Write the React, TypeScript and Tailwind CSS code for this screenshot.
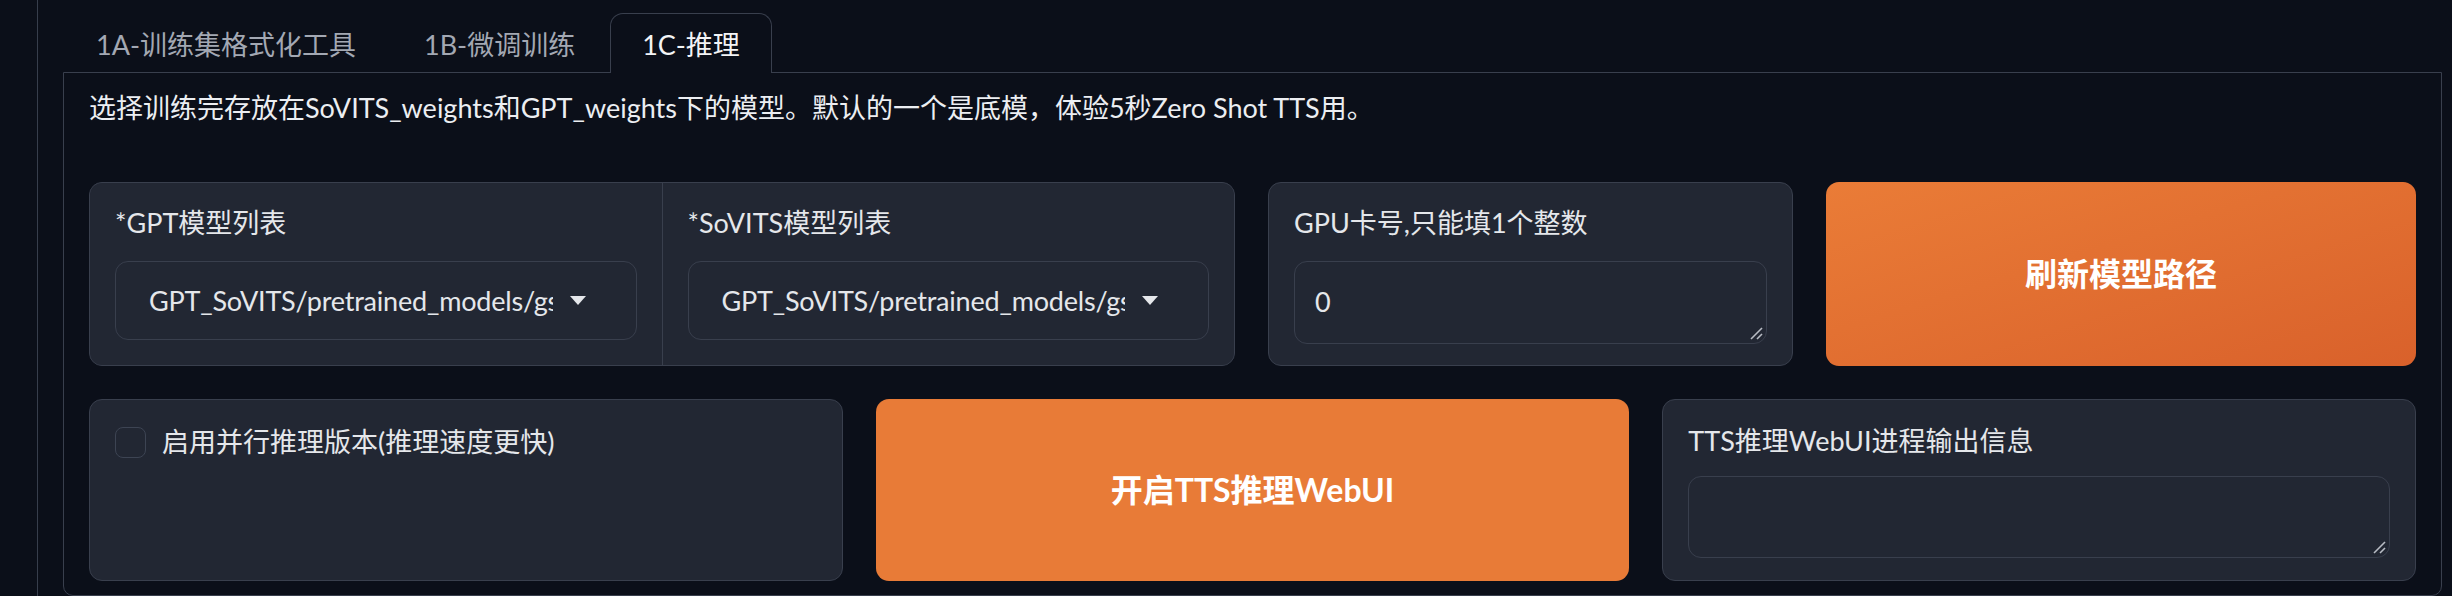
import React from "react";

const FONT = { fontFamily: "Lato, 'Noto Sans CJK SC', 'Noto Sans', sans-serif" };

function Caret() {
  return (
    <svg width="16" height="9" viewBox="0 0 16 9" className="shrink-0">
      <polygon points="0,0 16,0 8,9" fill="#e5e7eb" />
    </svg>
  );
}

function ResizeHandle() {
  return (
    <svg
      width="14"
      height="14"
      viewBox="0 0 14 14"
      className="absolute right-[3px] bottom-[3px]"
    >
      <line x1="2" y1="13" x2="13" y2="2" stroke="#b8bcc4" strokeWidth="1.6" />
      <line x1="8" y1="13" x2="13" y2="8" stroke="#b8bcc4" strokeWidth="1.6" />
    </svg>
  );
}

function Dropdown({ label, value }: { label: string; value: string }) {
  return (
    <div className="bg-[#222733] px-[25px] pt-[19px] pb-[24px]">
      <div className="h-[42px] leading-[42px] text-[27px] text-[#e5e7eb]">{label}</div>
      <div className="mt-[17px] h-[79px] rounded-[13px] border border-[#393f4d] bg-[#222733] flex items-center pl-[33px] pr-[50px]">
        <div className="flex-1 overflow-hidden whitespace-nowrap text-[27px] tracking-[-0.2px] text-[#e5e7eb] leading-[42px]">
          {value}
        </div>
        <div className="ml-[17px]">
          <Caret />
        </div>
      </div>
    </div>
  );
}

export default function App() {
  return (
    <div
      style={FONT}
      className="w-[2452px] h-[596px] overflow-hidden bg-[#0b0f19] pl-[37px]"
    >
      <div className="h-full border-l border-[#373e4c] pl-[25px] pt-[13px]">
        <div className="w-[2379px]">
          {/* Tabs */}
          <div className="flex items-end h-[60px] gap-[2px] relative z-10 -mb-px">
            <div className="h-[60px] px-[33px] flex items-center pt-[4px] text-[27px] text-[#a3a8b3] whitespace-nowrap">
              1A-训练集格式化工具
            </div>
            <div className="h-[60px] px-[33px] flex items-center pt-[4px] text-[27px] text-[#a3a8b3] whitespace-nowrap">
              1B-微调训练
            </div>
            <div className="h-[60px] px-[31px] flex items-center pt-[4px] text-[27px] text-[#f3f4f6] whitespace-nowrap border border-b-0 border-[#393f4d] rounded-t-[13px] bg-[#0b0f19]">
              1C-推理
            </div>
          </div>

          {/* Panel */}
          <div className="border border-[#393f4d] rounded-b-[10px] px-[25px] pt-[14px] pb-[14px]">
            <div className="h-[42px] leading-[42px] text-[27px] text-[#eceef2] whitespace-nowrap">
              选择训练完存放在SoVITS_weights和GPT_weights下的模型。默认的一个是底模，体验5秒Zero Shot TTS用。
            </div>

            <div className="mt-[53px] grid grid-cols-[1146fr_525fr_590fr] gap-[33px]">
              {/* group */}
              <div className="rounded-[13px] border border-[#393f4d] overflow-hidden grid grid-cols-2 gap-px bg-[#393f4d]">
                <Dropdown
                  label="*GPT模型列表"
                  value="GPT_SoVITS/pretrained_models/gsv-v2final-pretrained/s1bert25hz-5kh-longer-epoch=12-step=369668.ckpt"
                />
                <Dropdown
                  label="*SoVITS模型列表"
                  value="GPT_SoVITS/pretrained_models/gsv-v2final-pretrained/s2G2333k.pth"
                />
              </div>

              {/* GPU */}
              <div className="rounded-[13px] border border-[#393f4d] bg-[#222733] px-[25px] pt-[19px] pb-[21px]">
                <div className="h-[42px] leading-[42px] text-[27px] text-[#e5e7eb] whitespace-nowrap">
                  GPU卡号,只能填1个整数
                </div>
                <div className="relative mt-[17px] h-[83px] rounded-[13px] border border-[#393f4d] bg-[#222733] pl-[20px] pt-[19px]">
                  <div className="leading-[42px] text-[27px] text-[#e5e7eb]">0</div>
                  <ResizeHandle />
                </div>
              </div>

              {/* refresh button */}
              <div className="rounded-[13px] bg-gradient-to-br from-[#ea7c37] to-[#d9612b] flex items-center justify-center">
                <span className="text-[32px] font-bold text-white">刷新模型路径</span>
              </div>
            </div>

            <div className="mt-[33px] grid grid-cols-3 gap-[33px] h-[182px]">
              {/* checkbox */}
              <div className="rounded-[13px] border border-[#393f4d] bg-[#222733] px-[25px] pt-[26px]">
                <div className="flex items-center h-[32px]">
                  <div className="w-[31px] h-[31px] rounded-[8px] border border-[#3d4453] bg-[#222733] shrink-0" />
                  <span className="ml-[16px] text-[27px] leading-[42px] text-[#e5e7eb] whitespace-nowrap">
                    启用并行推理版本(推理速度更快)
                  </span>
                </div>
              </div>

              {/* start button */}
              <div className="rounded-[13px] bg-[#e87b37] flex items-center justify-center">
                <span className="text-[32px] font-bold text-white">开启TTS推理WebUI</span>
              </div>

              {/* output */}
              <div className="rounded-[13px] border border-[#393f4d] bg-[#222733] px-[25px] pt-[20px] pb-[21px]">
                <div className="h-[42px] leading-[42px] text-[27px] text-[#e5e7eb] whitespace-nowrap">
                  TTS推理WebUI进程输出信息
                </div>
                <div className="relative mt-[14px] h-[82px] rounded-[13px] border border-[#393f4d] bg-[#222733]">
                  <ResizeHandle />
                </div>
              </div>
            </div>
          </div>
        </div>
      </div>
    </div>
  );
}
